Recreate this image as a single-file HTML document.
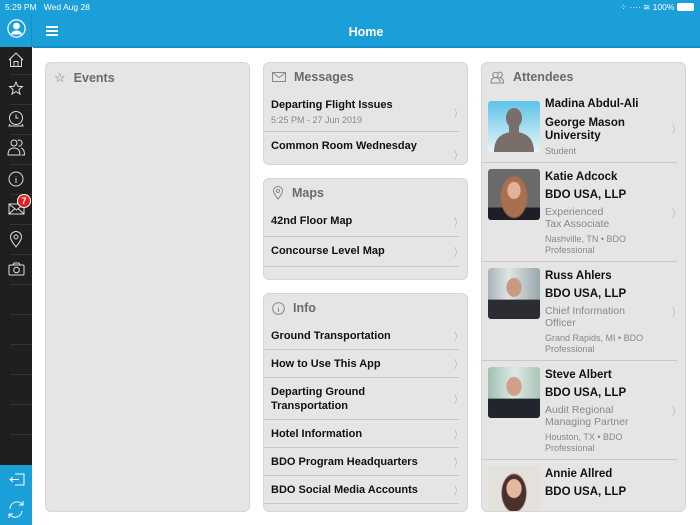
<!DOCTYPE html>
<html><head><meta charset="utf-8"><style>
*{margin:0;padding:0;box-sizing:border-box}
body{width:700px;height:525px;overflow:hidden;background:#fff;font-family:"Liberation Sans",Arial,sans-serif;position:relative}
.abs{position:absolute}
#hdr{left:0;top:0;width:700px;height:47px;background:#1a9fd9}
#side{left:0;top:47px;width:32px;height:478px;background:#1f1f1f}
#sideb{left:0;top:465px;width:32px;height:60px;background:#1a9fd9}
.sep{position:absolute;left:10px;width:22px;height:1px;background:#333}
.card{position:absolute;background:#e5e5e5;border:1px solid #d6d6d6;border-radius:6px;overflow:hidden}
.ch{position:absolute;left:8px;top:7px;font-size:12.5px;font-weight:bold;color:#6b6b6b;display:flex;align-items:center;gap:8px}
.row{position:absolute;left:0;width:195px;border-bottom:1px solid #c8c8c8}
.t{position:absolute;left:7px;font-size:11px;font-weight:bold;color:#111;line-height:14px}
.chev{position:absolute;left:188px;font-size:11px;color:#aaa;transform:scaleX(.6)}
.att{position:absolute;left:0;width:195px;border-bottom:1px solid #c8c8c8}
.ph{position:absolute;left:6px;top:6px;width:52px;height:51px;border-radius:3px}
.an{position:absolute;left:63px;font-size:11.5px;font-weight:bold;color:#111;line-height:13px}
.ar{position:absolute;left:63px;font-size:10.5px;color:#888;line-height:12px}
.al{position:absolute;left:63px;font-size:9px;color:#888;line-height:11px}
</style></head><body>
<div id="hdr" class="abs"></div>
<div class="abs" style="left:5px;top:2px;font-size:8.5px;color:#fff">5:29 PM&nbsp;&nbsp; Wed Aug 28</div>
<div class="abs" style="left:620px;top:2px;font-size:8.5px;color:#fff">⁘ ···· ≋ 100%</div>
<div class="abs" style="left:677px;top:3px;width:17px;height:8px;border:1px solid #fff;border-radius:2px;background:#fff"></div>
<div class="abs" style="left:33px;top:46px;width:667px;height:2px;background:#1590c6"></div>
<div class="abs" style="left:0;width:732px;text-align:center;top:25px;font-size:12.5px;font-weight:bold;color:#fff">Home</div>
<div class="abs" style="left:46px;top:26px;width:12px;height:2px;background:#fff;box-shadow:0 4px 0 #fff,0 8px 0 #fff"></div>
<div class="abs" style="left:31px;top:14px;width:1px;height:33px;background:#1590c6"></div>
<svg class="abs" style="left:7px;top:19px" width="19" height="19" viewBox="0 0 19 19"><circle cx="9.5" cy="9.5" r="8.6" fill="none" stroke="#fff" stroke-width="1.2"/><circle cx="9.5" cy="7" r="3.4" fill="#fff"/><path d="M3.5 15.5c1.5-3 3.5-4 6-4s4.5 1 6 4" fill="#fff"/></svg>
<div id="side" class="abs">
<div class="sep" style="top:27px"></div><div class="sep" style="top:57px"></div><div class="sep" style="top:87px"></div><div class="sep" style="top:117px"></div><div class="sep" style="top:147px"></div><div class="sep" style="top:177px"></div><div class="sep" style="top:207px"></div><div class="sep" style="top:237px"></div><div class="sep" style="top:267px"></div><div class="sep" style="top:297px"></div><div class="sep" style="top:327px"></div><div class="sep" style="top:357px"></div><div class="sep" style="top:387px"></div>
</div>
<svg class="abs" style="left:0;top:47px" width="32" height="240" viewBox="0 0 32 240" fill="none" stroke="#ddd" stroke-width="1">
<path d="M9 13l7-7 7 7M10.5 11.5v8h11v-8M14 19.5v-5h4v5"/>
<path d="M16 35l1.8 4.3 4.6.3-3.5 3 1.1 4.5-4-2.5-4 2.5 1.1-4.5-3.5-3 4.6-.3z"/>
<circle cx="16" cy="71" r="6.5"/><path d="M16 67.5v3.5h2.5M10 77l-1 2h14l-1-2"/>
<circle cx="14" cy="96" r="3"/><path d="M8 108c0-5 2.5-7 6-7s6 2 6 7zM17.5 93.5a3 3 0 1 1 1 5.5M21 101c2 .5 3.5 2.5 3.5 7h-3"/>
<circle cx="16" cy="132" r="7"/><path d="M16 129v.5M16 131v5"/>
<rect x="9" y="157" width="15" height="10"/><path d="M9 157l7.5 6 7.5-6M9 167l5.5-5M24 167l-5.5-5"/>
<path d="M16 200c-3-4-5.5-7-5.5-10a5.5 5.5 0 0 1 11 0c0 3-2.5 6-5.5 10z"/><circle cx="16" cy="190" r="2"/>
<rect x="9" y="218" width="15" height="10" rx="1"/><circle cx="16.5" cy="223" r="2.8"/><path d="M13 218l1-2h5l1 2"/>
</svg>
<div class="abs" style="left:17px;top:194px;width:14px;height:14px;border-radius:50%;background:#e02020;border:1px solid #fff;color:#fff;font-size:9px;font-weight:bold;text-align:center;line-height:12px">7</div>
<div id="sideb" class="abs"></div>
<svg class="abs" style="left:0;top:465px" width="32" height="60" viewBox="0 0 32 60" fill="none" stroke="#fff" stroke-width="1">
<path d="M15 9h9v11h-9M11 14.5h8M13 12l-3 2.5 3 2.5"/>
<path d="M10 44a7 7 0 0 1 12-5l1 1M22 46a7 7 0 0 1-12 4l-1-1M23 36v4h-4M9 53v-4h4"/>
</svg>

<div class="card" style="left:45px;top:62px;width:205px;height:450px">
<div class="ch"><span style="font-size:13px;font-weight:normal;color:#777">☆</span>Events</div>
</div>

<div class="card" style="left:263px;top:62px;width:205px;height:103px">
<div class="ch"><svg width="14" height="11"><rect x=".5" y=".5" width="13" height="9" fill="none" stroke="#888"/><path d="M.5 .5l6.5 5 6.5-5" fill="none" stroke="#888"/></svg>Messages</div>
<div class="row" style="top:29px;height:40px"><div class="t" style="top:6px">Departing Flight Issues</div><div class="abs" style="left:7px;top:23px;font-size:9px;color:#888">5:25 PM - 27 Jun 2019</div><div class="chev" style="top:13px">〉</div></div>
<div class="t" style="top:76px">Common Room Wednesday</div><div class="chev" style="top:84px">〉</div>
</div>

<div class="card" style="left:263px;top:178px;width:205px;height:102px">
<div class="ch"><svg width="12" height="14"><path d="M6 13c-2.5-3-4.5-5.5-4.5-8a4.5 4.5 0 0 1 9 0c0 2.5-2 5-4.5 8z" fill="none" stroke="#888"/><circle cx="6" cy="5" r="1.6" fill="none" stroke="#888"/></svg>Maps</div>
<div class="row" style="top:28px;height:30px"><div class="t" style="top:7px">42nd Floor Map</div><div class="chev" style="top:7px">〉</div></div>
<div class="row" style="top:58px;height:30px"><div class="t" style="top:7px">Concourse Level Map</div><div class="chev" style="top:7px">〉</div></div>
</div>

<div class="card" style="left:263px;top:293px;width:205px;height:219px">
<div class="ch"><svg width="13" height="13"><circle cx="6.5" cy="6.5" r="5.8" fill="none" stroke="#888"/><path d="M6.5 4v.5M6.5 6v4" stroke="#888"/></svg>Info</div>
<div class="row" style="top:28px;height:28px"><div class="t" style="top:7px">Ground Transportation</div><div class="chev" style="top:6px">〉</div></div>
<div class="row" style="top:56px;height:28px"><div class="t" style="top:7px">How to Use This App</div><div class="chev" style="top:6px">〉</div></div>
<div class="row" style="top:84px;height:42px"><div class="t" style="top:7px">Departing Ground<br>Transportation</div><div class="chev" style="top:13px">〉</div></div>
<div class="row" style="top:126px;height:28px"><div class="t" style="top:7px">Hotel Information</div><div class="chev" style="top:6px">〉</div></div>
<div class="row" style="top:154px;height:28px"><div class="t" style="top:7px">BDO Program Headquarters</div><div class="chev" style="top:6px">〉</div></div>
<div class="row" style="top:182px;height:28px"><div class="t" style="top:7px">BDO Social Media Accounts</div><div class="chev" style="top:6px">〉</div></div>
</div>

<div class="card" style="left:481px;top:62px;width:205px;height:450px">
<div class="ch"><svg width="15" height="13"><circle cx="5.5" cy="4" r="2.7" fill="none" stroke="#888"/><path d="M1 12c0-4 2-5.5 4.5-5.5S10 8 10 12zM8 1.7a2.7 2.7 0 1 1 .8 4.7M10.5 7c1.8.5 3 2 3 5H11" fill="none" stroke="#888"/></svg>Attendees</div>
<div class="att" style="top:32px;height:68px">
<div class="ph" style="background:linear-gradient(#5ec3e6,#e8f5fb)"><svg width="52" height="51"><ellipse cx="26" cy="17" rx="8" ry="10" fill="#7a6e6a"/><path d="M6 51c0-14 8-20 20-20s20 6 20 20z" fill="#7a6e6a"/><rect x="21" y="23" width="10" height="10" fill="#7a6e6a"/></svg></div>
<div class="an" style="top:3px">Madina Abdul-Ali</div><div class="an" style="top:22px;line-height:13px">George Mason<br>University</div><div class="al" style="top:51px">Student</div><div class="chev" style="top:26px">〉</div></div>
<div class="att" style="top:100px;height:99px">
<div class="ph" style="background:radial-gradient(ellipse 7px 9px at 50% 42%,#e2b39c 90%,transparent),radial-gradient(ellipse 14px 22px at 50% 55%,#a8704c 90%,transparent),linear-gradient(#6a6a6a 0 75%,#1e1e26 76%)"></div>
<div class="an" style="top:8px">Katie Adcock</div><div class="an" style="top:26px">BDO USA, LLP</div><div class="ar" style="top:43px">Experienced<br>Tax Associate</div><div class="al" style="top:71px">Nashville, TN • BDO<br>Professional</div><div class="chev" style="top:42px">〉</div></div>
<div class="att" style="top:199px;height:99px">
<div class="ph" style="background:radial-gradient(ellipse 8px 10px at 50% 38%,#c99a80 90%,transparent),linear-gradient(90deg,#a8b4b8,#dfe4e6 40%,#9aa6ab) top/100% 62% no-repeat,#2b2d33"></div>
<div class="an" style="top:8px">Russ Ahlers</div><div class="an" style="top:26px">BDO USA, LLP</div><div class="ar" style="top:43px">Chief Information<br>Officer</div><div class="al" style="top:71px">Grand Rapids, MI • BDO<br>Professional</div><div class="chev" style="top:42px">〉</div></div>
<div class="att" style="top:298px;height:99px">
<div class="ph" style="background:radial-gradient(ellipse 8px 10px at 50% 38%,#d0a088 90%,transparent),linear-gradient(90deg,#9fc0b0,#dfe9e4 50%,#aac6b8) top/100% 62% no-repeat,#23252c"></div>
<div class="an" style="top:8px">Steve Albert</div><div class="an" style="top:26px">BDO USA, LLP</div><div class="ar" style="top:43px">Audit Regional<br>Managing Partner</div><div class="al" style="top:71px">Houston, TX • BDO<br>Professional</div><div class="chev" style="top:42px">〉</div></div>
<div class="att" style="top:397px;height:60px;border:none">
<div class="ph" style="height:45px;background:radial-gradient(ellipse 8px 10px at 50% 50%,#e6b8a0 90%,transparent),radial-gradient(ellipse 13px 20px at 50% 60%,#4a302a 90%,transparent),#e4e0dc"></div>
<div class="an" style="top:8px">Annie Allred</div><div class="an" style="top:26px">BDO USA, LLP</div></div>
</div>
</body></html>
